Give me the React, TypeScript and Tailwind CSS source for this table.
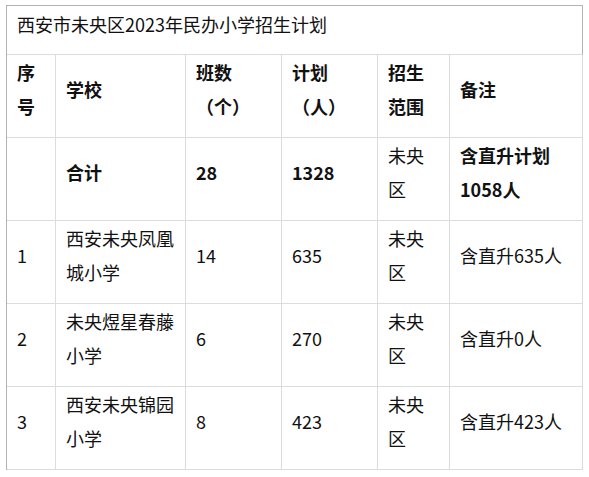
import React from "react";

type Row = {
  cells: React.ReactNode[][];
  bold?: boolean[];
};

const widths = ["w-[49px]", "w-[130px]", "w-[96px]", "w-[96px]", "w-[72px]", "w-[133px]"];

function Cell({ lines, bold, w }: { lines: React.ReactNode[]; bold?: boolean; w: string }) {
  return (
    <div
      className={`${w} h-[83px] shrink-0 flex flex-col justify-center pl-[10px] pr-[4px] pb-[14px] leading-[34px] border-r border-b border-[#dcdcdc] ${
        bold ? "font-bold" : "font-normal"
      }`}
    >
      {lines.map((l, i) => (
        <div key={i} className="whitespace-nowrap">
          {l}
        </div>
      ))}
    </div>
  );
}

const rows: Row[] = [
  {
    cells: [["序", "号"], ["学校"], ["班数", "（个）"], ["计划", "（人）"], ["招生", "范围"], ["备注"]],
    bold: [true, true, true, true, true, true],
  },
  {
    cells: [[""], ["合计"], ["28"], ["1328"], ["未央", "区"], ["含直升计划", "1058人"]],
    bold: [true, true, true, true, false, true],
  },
  {
    cells: [["1"], ["西安未央凤凰", "城小学"], ["14"], ["635"], ["未央", "区"], ["含直升635人"]],
  },
  {
    cells: [["2"], ["未央煜星春藤", "小学"], ["6"], ["270"], ["未央", "区"], ["含直升0人"]],
  },
  {
    cells: [["3"], ["西安未央锦园", "小学"], ["8"], ["423"], ["未央", "区"], ["含直升423人"]],
  },
];

export default function App() {
  return (
    <div
      className="min-h-[477px] w-[589px] bg-white pt-[5px] pl-[6px] text-[18px] text-[#111]"
      style={{ fontFamily: '"Noto Sans CJK SC", "Noto Sans", sans-serif' }}
    >
      <div className="w-[577px] border-l border-t border-[#b2b2b2]">
        <div className="h-[49px] flex items-center pl-[10px] pb-[13px] leading-[34px] border-r border-r-[#b2b2b2] border-b border-b-[#dcdcdc]">
          西安市未央区2023年民办小学招生计划
        </div>
        {rows.map((r, ri) => (
          <div key={ri} className="flex">
            {r.cells.map((c, ci) => (
              <Cell key={ci} lines={c} bold={r.bold?.[ci]} w={widths[ci]} />
            ))}
          </div>
        ))}
      </div>
    </div>
  );
}
